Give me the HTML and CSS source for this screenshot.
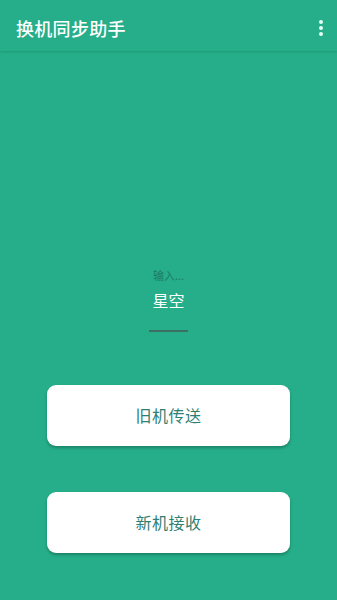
FILE: index.html
```html
<!DOCTYPE html>
<html lang="zh">
<head>
<meta charset="utf-8">
<link rel="stylesheet" href="styles.css">
</head>
<body>
<div class="app">
  <header class="appbar">
    <h1 class="title">换机同步助手</h1>
    <div class="menu" aria-label="更多">
      <span class="dot"></span><span class="dot"></span><span class="dot"></span>
    </div>
  </header>
  <main class="content">
    <div class="field">
      <div class="hint">输入...</div>
      <div class="value">星空</div>
      <div class="underline"></div>
    </div>
    <div class="actions">
      <button class="btn">旧机传送</button>
      <button class="btn">新机接收</button>
    </div>
  </main>
</div>
</body>
</html>
```
FILE: styles.css
```css
html, body {
  margin: 0;
  padding: 0;
  background: #25ae89;
  font-family: "Noto Sans CJK SC", "Noto Sans", sans-serif;
}
.app {
  width: 337px;
  height: 600px;
  background: #25ae89;
  overflow: hidden;
}
.appbar {
  height: 51px;
  background: #25ae89;
  display: flex;
  align-items: center;
  justify-content: space-between;
  padding: 0 16px 0 16px;
  box-shadow: 0 1px 2px rgba(0,0,0,0.12);
  position: relative;
}
.title {
  margin: 0;
  font-size: 18px;
  font-weight: 500;
  color: #ffffff;
  letter-spacing: 0.3px;
  padding-top: 4px;
}
.menu {
  display: flex;
  flex-direction: column;
  align-items: center;
  gap: 2px;
  padding-top: 5px;
  margin-right: -2px;
}
.dot {
  width: 4px;
  height: 4px;
  border-radius: 50%;
  background: #e8fbf5;
}
.content {
  display: flex;
  flex-direction: column;
  align-items: center;
}
.field {
  margin-top: 217px;
  display: flex;
  flex-direction: column;
  align-items: center;
}
.hint {
  font-size: 11px;
  line-height: 14px;
  color: #207a65;
}
.value {
  margin-top: 8px;
  font-size: 16px;
  line-height: 20px;
  color: #ffffff;
}
.underline {
  margin-top: 20px;
  width: 39px;
  height: 1.5px;
  background: #3d6e62;
}
.actions {
  margin-top: 53px;
  display: flex;
  flex-direction: column;
  gap: 46px;
}
.btn {
  width: 243px;
  height: 61px;
  border: none;
  border-radius: 9px;
  background: #ffffff;
  color: #2e8073;
  font-family: "Noto Sans CJK SC", "Noto Sans", sans-serif;
  font-size: 16px;
  letter-spacing: 0.5px;
  box-shadow: 0 2px 3px rgba(0,0,0,0.25);
  padding: 0;
}
```
